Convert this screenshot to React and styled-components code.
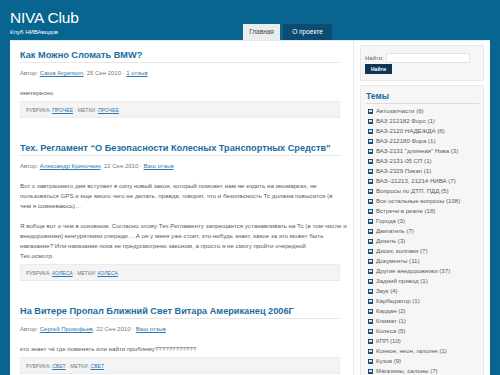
import React from "react";
import styled, { createGlobalStyle } from "styled-components";

const GlobalStyle = createGlobalStyle`
  html, body {
    margin: 0;
    padding: 0;
    background: #08658f;
  }
  body {
    font-family: "Liberation Sans", Arial, sans-serif;
    overflow: hidden;
  }
`;

const Page = styled.div`
  width: 500px;
  height: 375px;
  overflow: hidden;
  background: #08658f;
  padding: 0 10px;
  box-sizing: border-box;
`;

const Header = styled.header`
  display: flex;
  width: 322px;
  height: 40px;
`;

const Brand = styled.div`
  padding-top: 8px;
  color: #fff;
`;

const SiteName = styled.h1`
  margin: 0;
  font-size: 15.5px;
  line-height: 20px;
  font-weight: normal;
  letter-spacing: -0.2px;
`;

const Tagline = styled.div`
  font-size: 6px;
  line-height: 8px;
`;

const TabRow = styled.nav`
  margin-left: auto;
  display: flex;
  gap: 3px;
  align-self: flex-end;
`;

const Tab = styled.a`
  display: block;
  width: ${(p) => p.$w}px;
  height: 16px;
  line-height: 16px;
  text-align: center;
  font-size: 6.5px;
  text-decoration: none;
  background: ${(p) => (p.$active ? "#ececec" : "#0c4b72")};
  color: ${(p) => (p.$active ? "#444" : "#fff")};
`;

const Panel = styled.div`
  display: grid;
  grid-template-columns: 320px 1fr;
  column-gap: 13px;
  background: #fff;
  border-top: 1px solid #d8eef8;
  padding: 0 6px 0 10px;
  min-height: 335px;
`;

const Main = styled.main`
  padding-top: 8px;
`;

const Post = styled.article`
  margin-bottom: 24px;
`;

const PostTitle = styled.h2`
  margin: 0;
  font-size: 9.2px;
  line-height: 12px;
  padding-bottom: 1px;
  font-weight: bold;
  color: #1c6d9e;
  border-bottom: 1px solid #e6e6e6;
  white-space: nowrap;
`;

const Meta = styled.div`
  margin-top: 5px;
  font-size: 6px;
  line-height: 10px;
  color: #777;
`;

const Link = styled.a`
  color: #2b78b3;
  text-decoration: underline;
`;

const Text = styled.p`
  margin: 10px 0 0;
  font-size: 6.2px;
  line-height: 10px;
  color: #5a5a5a;
  white-space: nowrap;
`;

const PostFooter = styled.div`
  margin-top: 3px;
  height: 17px;
  line-height: 16px;
  padding: 0 5px;
  background: #f4f4f4;
  border: 1px solid #ebebeb;
  box-sizing: border-box;
  font-size: 5.1px;
  color: #777;
  text-transform: uppercase;
`;

const Sidebar = styled.aside`
  border-left: 1px solid #ececec;
  padding: 4px 0 0 6px;
  display: flex;
  flex-direction: column;
  gap: 4px;
`;

const Widget = styled.div`
  background: #f6f6f6;
  border: 1px solid #e8e8e8;
  padding: ${(p) => p.$pad};
`;

const SearchRow = styled.div`
  display: flex;
  align-items: center;
  gap: 2px;
  font-size: 6px;
  color: #666;
`;

const SearchInput = styled.div`
  width: 84px;
  height: 10px;
  background: #fff;
  border: 1px solid #e2e2e2;
  box-sizing: border-box;
`;

const SearchButton = styled.button`
  display: block;
  margin-top: 1px;
  width: 27px;
  height: 10px;
  padding: 0;
  border: none;
  background: #0d3658;
  color: #fff;
  font-family: inherit;
  font-size: 5px;
  font-weight: bold;
`;

const WidgetTitle = styled.h3`
  margin: 0;
  font-size: 8.5px;
  line-height: 11px;
  color: #1c6d9e;
  border-bottom: 1px solid #dcdcdc;
  padding-bottom: 1px;
`;

const List = styled.ul`
  list-style: none;
  margin: 2px 0 0;
  padding: 0 0 0 2px;
`;

const Item = styled.li`
  display: flex;
  align-items: center;
  gap: 3px;
  font-size: 6.1px;
  line-height: 10px;
  color: #5a5a5a;
  white-space: nowrap;
`;

const Bullet = () => (
  <svg width="5" height="5" viewBox="0 0 5 5">
    <rect width="5" height="5" fill="#1f4e72" />
    <rect x="1" y="1" width="3" height="2" fill="#d6e6f0" />
  </svg>
);

const topics = [
  "Автозапчасти (6)",
  "ВАЗ 212182 Форс (1)",
  "ВАЗ-2120 НАДЕЖДА (6)",
  "ВАЗ-212180 Фора (1)",
  "ВАЗ-2131 \"длинная\" Нива (3)",
  "ВАЗ-2131-05 СП (1)",
  "ВАЗ-2329 Пикап (1)",
  "ВАЗ–21213, 21214 НИВА (7)",
  "Вопросы по ДТП, ПДД (5)",
  "Все остальные вопросы (108)",
  "Встречи в реале (18)",
  "Города (3)",
  "Двигатель (7)",
  "Дизель (3)",
  "Диски, колпаки (7)",
  "Документы (11)",
  "Другие внедорожники (37)",
  "Задний привод (1)",
  "Звук (4)",
  "Карбюратор (1)",
  "Кардан (2)",
  "Климат (1)",
  "Колеса (5)",
  "КПП (10)",
  "Ксенон, неон, галоген (1)",
  "Кузов (9)",
  "Магазины, салоны (7)",
];

const PostMeta = ({ author, date, comments }) => (
  <Meta>
    Автор: <Link href="#">{author}</Link>, {date} · <Link href="#">{comments}</Link>
  </Meta>
);

const Footer = ({ rubric, tag }) => (
  <PostFooter>
    Рубрика: <Link href="#">{rubric}</Link> · Метки: <Link href="#">{tag}</Link>
  </PostFooter>
);

export default function App() {
  return (
    <>
      <GlobalStyle />
      <Page>
        <Header>
          <Brand>
            <SiteName>NIVA Club</SiteName>
            <Tagline>Клуб НИВАводов</Tagline>
          </Brand>
          <TabRow>
            <Tab href="#" $active $w={37}>Главная</Tab>
            <Tab href="#" $w={49}>О проекте</Tab>
          </TabRow>
        </Header>
        <Panel>
          <Main>
            <Post>
              <PostTitle>Как Можно Сломать BMW?</PostTitle>
              <PostMeta author="Саша Argentum" date="25 Сен 2010" comments="1 отзыв" />
              <Text>инетересно</Text>
              <Footer rubric="Прочее" tag="Прочее" />
            </Post>
            <Post>
              <PostTitle>Тех. Регламент “О Безопасности Колесных Транспортных Средств”</PostTitle>
              <PostMeta author="Александр Криночкин" date="22 Сен 2010" comments="Ваш отзыв" />
              <Text>
                Вот с завтрашнего дня вступает в силу новый закон, который поможет нам не ездить на иномарках, не
                <br />
                пользоваться GPS и еще много чего не делать, правда, говорят, что и безопасность Тс должна повысится (в
                <br />
                чем я сомневаюсь)…
              </Text>
              <Text>
                Я вобще вот о чем в основном. Согласно этому Тех.Регламенту запрещается устанавливать на Тс (в том числе и
                <br />
                внедорожники) кенгурятники спереди… А он у меня уже стоит, кто-нибудь знает, какое за это может быть
                <br />
                наказание? Или наказание пока не предусмотрено законом, а просто я не смогу пройти очередной
                <br />
                Тех.осмотр.
              </Text>
              <Footer rubric="Колеса" tag="Колеса" />
            </Post>
            <Post>
              <PostTitle>На Витере Пропал Ближний Свет Витара Американец 2006Г</PostTitle>
              <PostMeta author="Сергей Прокофьев" date="22 Сен 2010" comments="Ваш отзыв" />
              <Text>кто знает чё где поменять или найти проблему????????????</Text>
              <Footer rubric="Свет" tag="Свет" />
            </Post>
          </Main>
          <Sidebar>
            <Widget $pad="7px 4px 6px 4px">
              <SearchRow>
                Найти:
                <SearchInput />
              </SearchRow>
              <SearchButton>Найти</SearchButton>
            </Widget>
            <Widget $pad="5px 4px 6px 5px">
              <WidgetTitle>Темы</WidgetTitle>
              <List>
                {topics.map((t) => (
                  <Item key={t}>
                    <Bullet />
                    {t}
                  </Item>
                ))}
              </List>
            </Widget>
          </Sidebar>
        </Panel>
      </Page>
    </>
  );
}
